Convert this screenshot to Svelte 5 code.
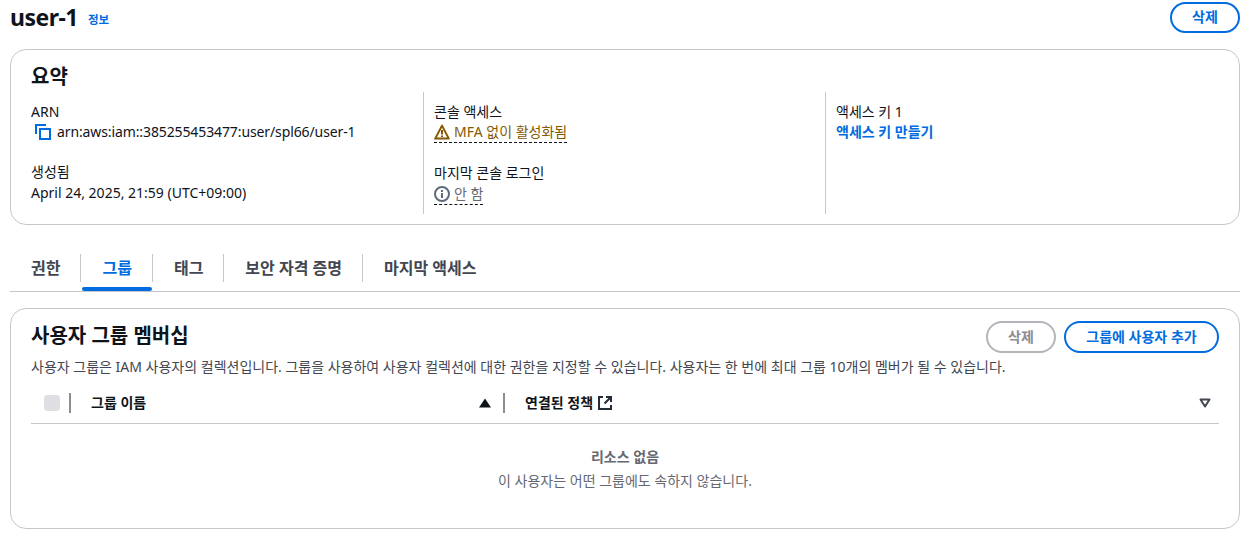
<script>
  let tabs = ['권한', '그룹', '태그', '보안 자격 증명', '마지막 액세스'];
</script>

<div class="page">
  <header class="top">
    <h1>user-1</h1>
    <a class="info" href="#info">정보</a>
    <button class="btn top-btn">삭제</button>
  </header>

  <section class="card summary">
    <h2>요약</h2>
    <div class="cols">
      <div class="col first">
        <div class="field">
          <div class="label">ARN</div>
          <div class="value arn">
            <svg class="copy" width="16" height="16" viewBox="0 0 16 16" fill="none" stroke="#006ce0" stroke-width="2">
              <path d="M1 10V1h10" />
              <rect x="5" y="5" width="10" height="10" />
            </svg>
            <span>arn:aws:iam::385255453477:user/spl66/user-1</span>
          </div>
        </div>
        <div class="field">
          <div class="label">생성됨</div>
          <div class="value">April 24, 2025, 21:59 (UTC+09:00)</div>
        </div>
      </div>
      <div class="col">
        <div class="field">
          <div class="label">콘솔 액세스</div>
          <div class="value status warn">
            <svg width="16" height="16" viewBox="0 0 16 16" fill="none">
              <path d="M8 1.6 1.2 14.6h13.6z" stroke="#855900" stroke-width="2" stroke-linejoin="round" />
              <path d="M8 6v4.4M8 11.4v1.6" stroke="#855900" stroke-width="2" />
            </svg>
            <span>MFA 없이 활성화됨</span>
          </div>
        </div>
        <div class="field">
          <div class="label">마지막 콘솔 로그인</div>
          <div class="value status muted">
            <svg width="16" height="16" viewBox="0 0 16 16" fill="none">
              <circle cx="8" cy="8" r="7" stroke="#5f6b7a" stroke-width="2" />
              <path d="M8 7v5M8 4v2" stroke="#5f6b7a" stroke-width="2" />
            </svg>
            <span>안 함</span>
          </div>
        </div>
      </div>
      <div class="col">
        <div class="field">
          <div class="label">액세스 키 1</div>
          <a class="value link" href="#key">액세스 키 만들기</a>
        </div>
      </div>
    </div>
  </section>

  <nav class="tabs">
    {#each tabs as t, i}
      <div class="tab" class:active={i === 1}>{t}</div>
    {/each}
  </nav>

  <section class="card groups">
    <div class="g-head">
      <h2>사용자 그룹 멤버십</h2>
      <div class="actions">
        <button class="btn disabled">삭제</button>
        <button class="btn add">그룹에 사용자 추가</button>
      </div>
    </div>
    <p class="desc">사용자 그룹은 IAM 사용자의 컬렉션입니다. 그룹을 사용하여 사용자 컬렉션에 대한 권한을 지정할 수 있습니다. 사용자는 한 번에 최대 그룹 10개의 멤버가 될 수 있습니다.</p>
    <div class="thead">
      <div class="th check"><span class="box"></span></div>
      <div class="th name">
        <span>그룹 이름</span>
        <svg width="12" height="10" viewBox="0 0 12 10"><path d="M6 0.5 12 9.5H0z" fill="#0f141a" /></svg>
      </div>
      <div class="th policy">
        <span>연결된 정책</span>
        <svg width="16" height="16" viewBox="0 0 16 16" fill="none" stroke="#232b37" stroke-width="2">
          <path d="M6 2H2v12h12v-4" />
          <path d="M9 2h5v5M14 2 7.5 8.5" />
        </svg>
      </div>
      <svg class="pref" width="12" height="10" viewBox="0 0 12 10" fill="none"><path d="M1.5 1.5h9L6 8.5z" stroke="#424650" stroke-width="2" stroke-linejoin="round" /></svg>
    </div>
    <div class="empty">
      <div class="e-title">리소스 없음</div>
      <div class="e-sub">이 사용자는 어떤 그룹에도 속하지 않습니다.</div>
    </div>
  </section>
</div>

<style>
  :global(body) {
    margin: 0;
    background: #fff;
  }
  .page {
    box-sizing: border-box;
    width: 1250px;
    height: 534px;
    overflow: hidden;
    padding: 0 10px;
    font-family: "Noto Sans", "Noto Sans CJK KR", sans-serif;
    font-size: 14px;
    line-height: 20px;
    color: #0f141a;
  }
  .top {
    display: flex;
    align-items: center;
    height: 34px;
    margin-bottom: 15px;
  }
  h1 {
    margin: 0;
    font-size: 23px;
    line-height: 34px;
    font-weight: 700;
    letter-spacing: -0.5px;
  }
  .info {
    margin: 6px 0 0 10px;
    font-size: 11.5px;
    font-weight: 700;
    color: #006ce0;
    text-decoration: none;
  }
  .btn {
    box-sizing: border-box;
    height: 32px;
    padding: 0 20px;
    border: 2px solid #006ce0;
    border-radius: 20px;
    background: #fff;
    color: #006ce0;
    font: inherit;
    font-weight: 700;
  }
  .top-btn {
    margin-left: auto;
    width: 70px;
    height: 31px;
    padding: 0;
  }
  .btn.disabled {
    border-color: #b4b4bb;
    color: #8c8c94;
    width: 70px;
    padding: 0;
  }
  .btn.add {
    width: 155px;
    padding: 0;
  }
  .card {
    box-sizing: border-box;
    border: 1px solid #c6c6cd;
    border-radius: 16px;
  }
  .summary {
    height: 176px;
    padding: 14px 20px 0;
  }
  h2 {
    margin: 0;
    font-size: 20px;
    line-height: 26px;
    font-weight: 700;
  }
  .cols {
    display: grid;
    grid-template-columns: 392px 402px 1fr;
    margin-top: 2px;
  }
  .col {
    box-sizing: border-box;
    display: flex;
    flex-direction: column;
    gap: 20px;
    height: 122px;
    padding: 10px 0 0 10px;
    border-left: 1px solid #c6c6cd;
  }
  .col.first {
    padding-left: 0;
    border-left: 0;
  }
  .field + .field .value {
    margin-top: 1px;
  }
  .arn {
    display: flex;
    align-items: center;
    gap: 6px;
    padding-left: 4px;
    letter-spacing: -0.11px;
  }
  .status {
    display: flex;
    align-items: center;
    gap: 4px;
    width: fit-content;
    border-bottom: 1px dashed #0f141a;
    height: 20px;
  }
  .warn {
    color: #855900;
  }
  .muted {
    color: #656871;
  }
  .link {
    display: block;
    font-weight: 700;
    color: #006ce0;
    text-decoration: none;
  }
  .tabs {
    display: flex;
    align-items: flex-start;
    height: 37px;
    padding-top: 14px;
    margin-top: 15px;
    border-bottom: 1px solid #c6c6cd;
  }
  .tab {
    position: relative;
    padding: 0 20px 0 21px;
    height: 28px;
    line-height: 28px;
    font-size: 16px;
    font-weight: 700;
    color: #424650;
    border-left: 1px solid #c6c6cd;
  }
  .tab:first-child {
    border-left: 0;
  }
  .tab.active {
    color: #006ce0;
  }
  .tab.active::after {
    content: "";
    position: absolute;
    left: 1px;
    right: 0;
    bottom: -9px;
    height: 4px;
    border-radius: 2px;
    background: #006ce0;
  }
  .groups {
    height: 221px;
    margin-top: 16px;
    padding: 12px 20px 0;
  }
  .g-head {
    display: flex;
    align-items: flex-start;
    justify-content: space-between;
    height: 32px;
  }
  .g-head h2 {
    margin-top: 1px;
    line-height: 28px;
  }
  .actions {
    display: flex;
    gap: 8px;
  }
  .desc {
    margin: 4px 0 0;
    font-size: 14px;
    line-height: 20px;
    color: #424650;
  }
  .thead {
    display: flex;
    align-items: center;
    height: 40px;
    margin-top: 6px;
    border-bottom: 1px solid #c6c6cd;
    font-weight: 700;
    font-size: 14px;
  }
  .th {
    display: flex;
    align-items: center;
    height: 20px;
  }
  .check {
    width: 40px;
    padding-left: 13px;
    box-sizing: border-box;
    border-right: 2px solid #8c8c94;
  }
  .box {
    width: 16px;
    height: 16px;
    border-radius: 4px;
    background: #dedee3;
  }
  .name {
    justify-content: space-between;
    width: 434px;
    padding: 0 12px 0 20px;
    box-sizing: border-box;
    border-right: 2px solid #8c8c94;
  }
  .policy {
    gap: 4px;
    padding-left: 20px;
  }
  .pref {
    margin-left: auto;
    margin-right: 8px;
  }
  .empty {
    margin-top: 21px;
    text-align: center;
    font-size: 14px;
    color: #656871;
  }
  .e-title {
    font-weight: 700;
    line-height: 24px;
  }
  .e-sub {
    line-height: 24px;
  }
</style>
